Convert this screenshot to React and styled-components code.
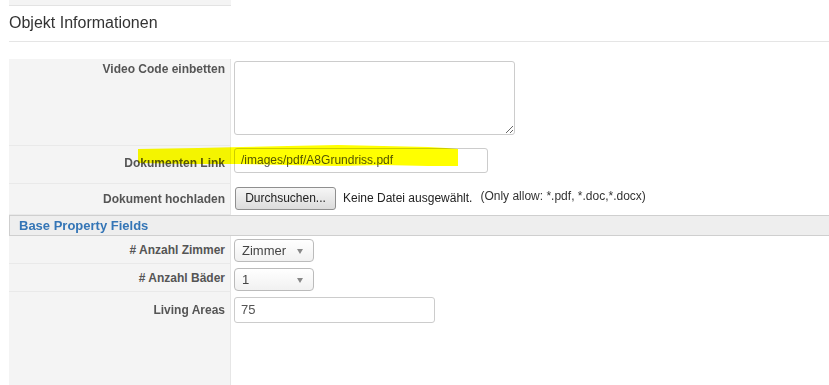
import React from "react";
import styled, { createGlobalStyle } from "styled-components";

const GlobalStyle = createGlobalStyle`
    body {
        margin: 0;
        background: #fff;
        font-family: "Liberation Sans", Arial, sans-serif;
    }
`

const Page = styled.div`
    width: 829px;
    height: 385px;
    overflow: hidden;
    padding-left: 9px;
    box-sizing: border-box;
`

const TopStub = styled.div`
    width: 222px;
    height: 5px;
    background: #f4f4f4;
    border-bottom: 1px solid #e3e3e3;
`

const Title = styled.h2`
    margin: 0;
    padding: 8px 0 9px;
    font-size: 16px;
    font-weight: normal;
    line-height: 18px;
    color: #333;
    border-bottom: 1px solid #e5e5e5;
`

const Form = styled.div`
    margin-top: 17px;
`

const Row = styled.div`
    position: relative;
    display: grid;
    grid-template-columns: 222px 1fr;
    min-height: ${(props) => props.height}px;
`

const Label = styled.div`
    background: #f4f4f4;
    border-right: 1px solid #e6e6e6;
    border-bottom: 1px solid #e9e9e9;
    text-align: right;
    padding: ${(props) => props.top}px 5px 0 0;
    font-size: 12px;
    font-weight: bold;
    line-height: 14px;
    color: #555;
`

const Field = styled.div`
    display: flex;
    align-items: flex-start;
    padding: ${(props) => props.top}px 0 0 3px;
`

const TextArea = styled.textarea`
    width: 281px;
    height: 74px;
    box-sizing: border-box;
    border: 1px solid #ccc;
    border-radius: 3px;
    resize: both;
    margin: 0;
`

const TextInput = styled.div`
    width: ${(props) => props.width}px;
    height: ${(props) => props.height}px;
    box-sizing: border-box;
    border: 1px solid #ccc;
    border-radius: 3px;
    padding: 0 6px;
    font-size: ${(props) => props.size || 12}px;
    line-height: ${(props) => props.height - 2}px;
    color: #555;
    background: #fff;
`

const FileButton = styled.div`
    width: 101px;
    height: 23px;
    box-sizing: border-box;
    margin-left: 1px;
    border: 1px solid #8f8f8f;
    border-radius: 3px;
    background: linear-gradient(#f6f6f6, #dcdcdc);
    font-size: 12px;
    line-height: 21px;
    text-align: center;
    color: #222;
`

const FileStatus = styled.span`
    margin-left: 7px;
    font-size: 12px;
    line-height: 23px;
    color: #222;
`

const FileHint = styled.span`
    margin-left: 8px;
    font-size: 12px;
    line-height: 19px;
    color: #333;
`

const Select = styled.div`
    position: relative;
    width: 80px;
    height: 23px;
    box-sizing: border-box;
    border: 1px solid #bbb;
    border-radius: 4px;
    background: linear-gradient(#fff, #f1f1f1);
    padding-left: 7px;
    font-size: 13px;
    line-height: 21px;
    color: #444;

    &::after {
        content: "";
        position: absolute;
        right: 10px;
        top: 9px;
        border-left: 3px solid transparent;
        border-right: 3px solid transparent;
        border-top: 5px solid #888;
    }
`

const SectionHeader = styled.div`
    height: 19px;
    background: #eee;
    border-top: 1px solid #cfcfcf;
    border-bottom: 1px solid #cfcfcf;
    border-left: 1px solid #cfcfcf;
    padding-left: 9px;
    font-size: 13px;
    font-weight: bold;
    line-height: 19px;
    color: #3475b6;
`

const Marker = styled.svg`
    position: absolute;
    left: 129px;
    top: -1px;
    mix-blend-mode: multiply;
    pointer-events: none;
`

const App = () => {
    return (
        <Page>
            <GlobalStyle />
            <TopStub />
            <Title>Objekt Informationen</Title>
            <Form>
                <Row height={87}>
                    <Label top={3}>Video Code einbetten</Label>
                    <Field top={2}>
                        <TextArea />
                    </Field>
                </Row>
                <Row height={38}>
                    <Label top={10}>Dokumenten Link</Label>
                    <Field top={2}>
                        <TextInput width={254} height={25}>/images/pdf/A8Grundriss.pdf</TextInput>
                    </Field>
                    <Marker width="322" height="23" viewBox="0 0 322 23">
                        <path
                            d="M0 4 L60 3 L104 2 L150 1 L200 0 L245 1 L290 2 L308 3 L320 4 L320 21 L290 21 L245 20 L200 21 L150 20 L100 19 L50 19 L0 18 Z"
                            fill="#ffff00"
                        />
                    </Marker>
                </Row>
                <Row height={31}>
                    <Label top={8}>Dokument hochladen</Label>
                    <Field top={3}>
                        <FileButton>Durchsuchen...</FileButton>
                        <FileStatus>Keine Datei ausgewählt.</FileStatus>
                        <FileHint>(Only allow: *.pdf, *.doc,*.docx)</FileHint>
                    </Field>
                </Row>
                <SectionHeader>Base Property Fields</SectionHeader>
                <Row height={28}>
                    <Label top={7}># Anzahl Zimmer</Label>
                    <Field top={3}>
                        <Select>Zimmer</Select>
                    </Field>
                </Row>
                <Row height={28}>
                    <Label top={7}># Anzahl Bäder</Label>
                    <Field top={4}>
                        <Select>1</Select>
                    </Field>
                </Row>
                <Row height={100}>
                    <Label top={11}>Living Areas</Label>
                    <Field top={5}>
                        <TextInput width={201} height={26} size={13}>75</TextInput>
                    </Field>
                </Row>
            </Form>
        </Page>
    );
};

export default App;
